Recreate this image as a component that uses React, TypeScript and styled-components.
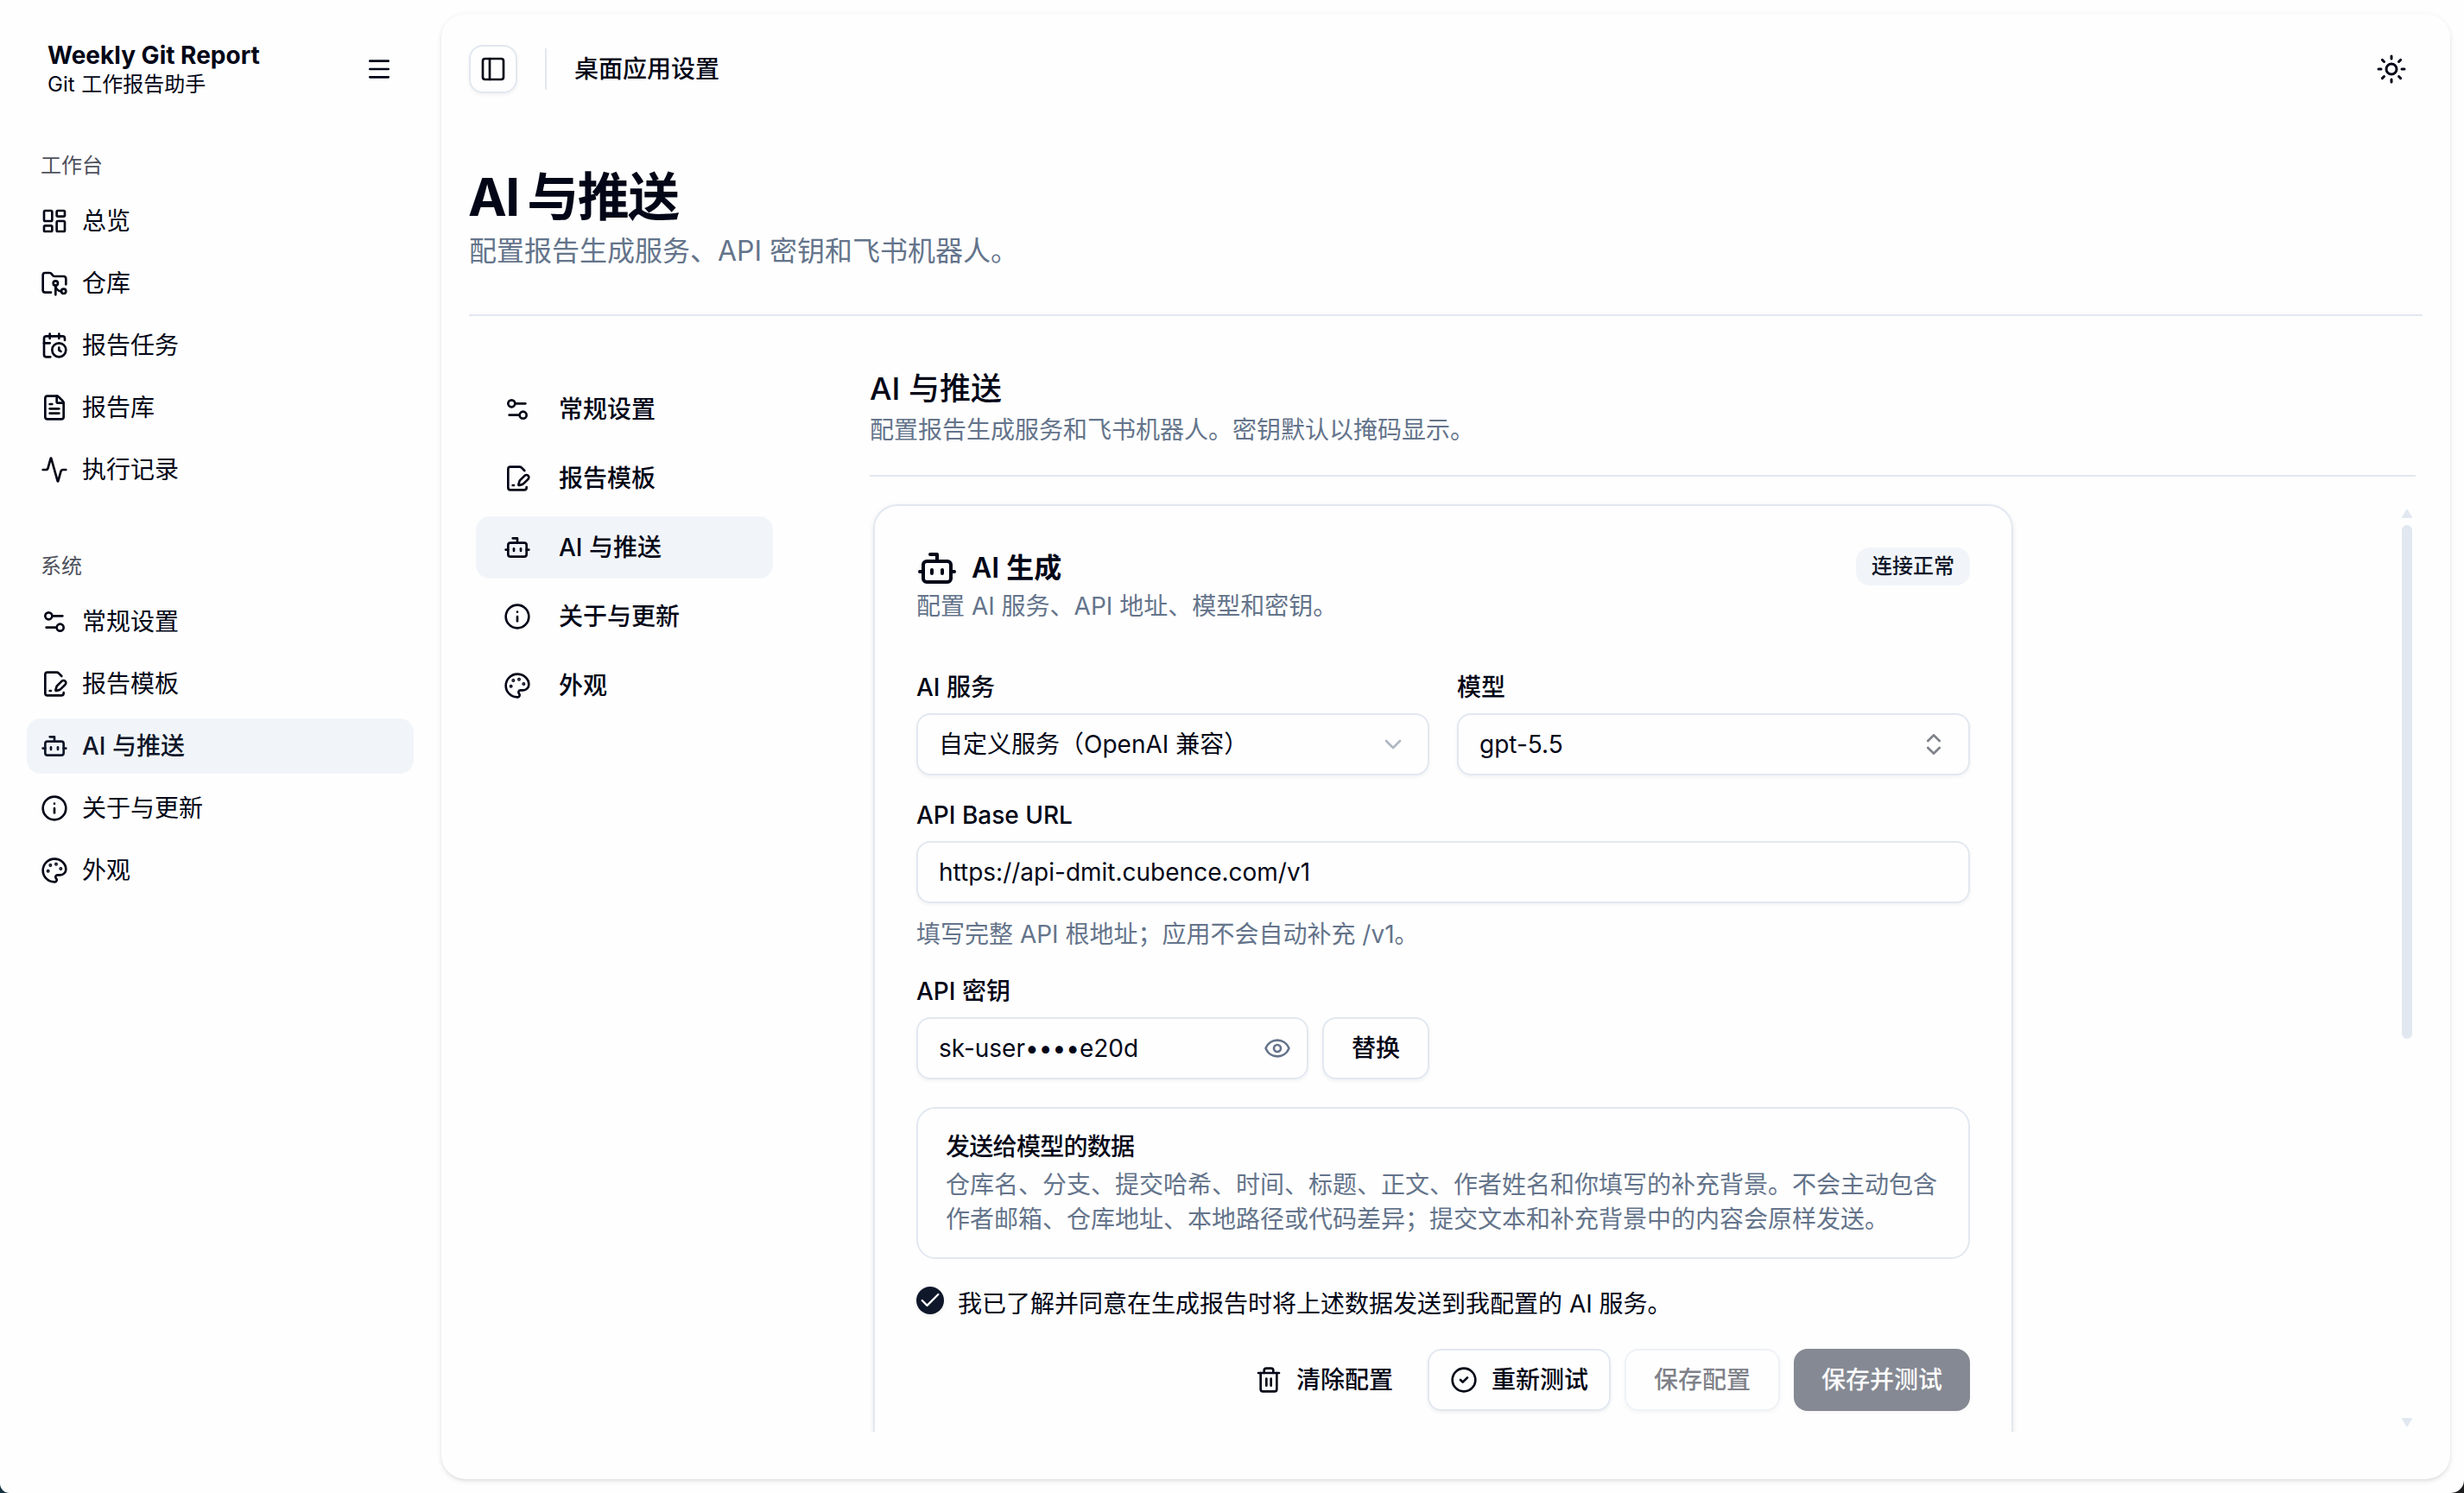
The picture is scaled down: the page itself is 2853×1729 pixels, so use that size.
import React from "react";
import styled, { createGlobalStyle, css } from "styled-components";
import {
  Activity,
  Bot,
  CalendarClock,
  Check,
  ChevronDown,
  ChevronsUpDown,
  CircleCheck,
  Eye,
  FilePenLine,
  FileText,
  FolderGit2,
  Info,
  LayoutDashboard,
  Menu,
  Palette,
  PanelLeft,
  Settings2,
  Sun,
  Trash2,
} from "lucide-react";
import type { LucideIcon } from "lucide-react";

const color = {
  bg: "#fefefe",
  ink: "#020617",
  primary: "#0f172a",
  muted: "#64748b",
  border: "#e2e8f0",
  accent: "#f1f5f9",
};

const GlobalStyle = createGlobalStyle`
  *, *::before, *::after { box-sizing: border-box; }
  body {
    margin: 0;
    background: linear-gradient(90deg, #17333f 0 50%, #1c1c1e 50% 100%);
    color: ${color.ink};
    font-family: Inter, "Noto Sans CJK SC", sans-serif;
    font-size: 28px;
    line-height: 40px;
    -webkit-font-smoothing: antialiased;
  }
  h1, h2, h3, p { margin: 0; }
  button { font: inherit; color: inherit; background: none; border: 0; padding: 0; }
  svg { display: block; flex: none; }
`;

const Window = styled.div`
  width: 2853px;
  height: 1729px;
  display: flex;
  overflow: hidden;
  background: ${color.bg};
  border-radius: 0 0 15px 11px;
`;

/* Sidebar */

const Sidebar = styled.aside`
  width: 511px;
  padding: 32px 32px 0 31px;
  display: flex;
  flex-direction: column;
`;

const Brand = styled.header`
  height: 96px;
  padding: 0 24px;
  display: flex;
  align-items: center;
  justify-content: space-between;
`;

const BrandText = styled.div`
  display: flex;
  flex-direction: column;
`;

const BrandName = styled.strong`
  font-size: 28px;
  font-weight: 700;
  line-height: 35px;
`;

const BrandSub = styled.span`
  font-size: 24px;
  line-height: 31px;
  word-spacing: 1px;
`;

const NavGroup = styled.nav`
  display: flex;
  flex-direction: column;
  gap: 8px;
  & + & {
    margin-top: 48px;
  }
`;

const GroupLabel = styled.div`
  height: 64px;
  padding: 0 16px;
  margin-bottom: -8px;
  display: flex;
  align-items: center;
  font-size: 24px;
  color: #4e515d;
`;

const Groups = styled.div`
  padding-top: 32px;
`;

const NavItem = styled.a<{ $active?: boolean }>`
  height: 64px;
  padding: 0 16px;
  display: flex;
  align-items: center;
  gap: 16px;
  border-radius: 16px;
  ${(p) =>
    p.$active &&
    css`
      background: ${color.accent};
      color: ${color.primary};
      font-weight: 500;
    `}
`;

/* Main panel */

const Panel = styled.main`
  width: 2326px;
  height: 1697px;
  margin-top: 16px;
  padding: 0 32px;
  display: flex;
  flex-direction: column;
  background: ${color.bg};
  border-radius: 28px;
  box-shadow: 0 2px 6px rgba(0, 0, 0, 0.1), 0 2px 4px -2px rgba(0, 0, 0, 0.1);
`;

const TopBar = styled.header`
  height: 128px;
  display: flex;
  align-items: center;
`;

const IconButton = styled.button`
  width: 56px;
  height: 56px;
  display: grid;
  place-items: center;
  border: 2px solid ${color.border};
  border-radius: 16px;
  box-shadow: 0 2px 4px rgba(0, 0, 0, 0.05);
`;

const Divider = styled.span`
  width: 2px;
  height: 48px;
  margin: 0 32px;
  background: ${color.border};
`;

const TopTitle = styled.span`
  font-weight: 500;
`;

const ThemeButton = styled.button`
  width: 72px;
  height: 72px;
  margin-left: auto;
  display: grid;
  place-items: center;
`;

const PageHead = styled.section`
  height: 222px;
  padding-top: 48px;
  border-bottom: 2px solid ${color.border};
`;

const PageTitle = styled.h1`
  margin-left: -1px;
  font-size: 60px;
  line-height: 72px;
  font-weight: 700;
  letter-spacing: -1.5px;
  word-spacing: -3px;
`;

const PageSub = styled.p`
  margin-top: 3px;
  font-size: 32px;
  line-height: 48px;
  color: ${color.muted};
`;

const Columns = styled.div`
  display: flex;
  height: 1292px;
`;

const SettingsNav = styled.nav`
  width: 464px;
  padding: 72px 112px 0 8px;
  display: flex;
  flex-direction: column;
  gap: 8px;
`;

const SettingsLink = styled.a<{ $active?: boolean }>`
  height: 72px;
  padding: 0 32px;
  display: flex;
  align-items: center;
  gap: 32px;
  border-radius: 16px;
  font-weight: 500;
  background: ${(p) => (p.$active ? color.accent : "transparent")};
`;

const Section = styled.section`
  width: 1790px;
  display: flex;
  flex-direction: column;
`;

const SectionHead = styled.header`
  height: 186px;
  padding-top: 56px;
  border-bottom: 2px solid ${color.border};
`;

const SectionTitle = styled.h2`
  font-size: 36px;
  line-height: 56px;
  font-weight: 500;
`;

const SectionDesc = styled.p`
  color: ${color.muted};
`;

const ScrollArea = styled.div`
  height: 1078px;
  margin-top: 28px;
  display: flex;
  justify-content: space-between;
  overflow: hidden;
`;

const ScrollBar = styled.div`
  width: 12px;
  height: 1078px;
  margin-right: 4px;
  padding: 10px 0 6px;
  display: flex;
  flex-direction: column;
  justify-content: space-between;
`;

const ScrollTop = styled.div`
  display: flex;
  flex-direction: column;
  gap: 8px;
`;

const ScrollThumb = styled.span`
  width: 12px;
  height: 595px;
  border-radius: 6px;
  background: ${color.border};
`;

/* Card */

const Card = styled.article`
  width: 1320px;
  height: 1500px;
  margin: 4px 0 0 4px;
  padding: 48px;
  border: 2px solid ${color.border};
  border-radius: 28px;
  box-shadow: 0 2px 6px rgba(0, 0, 0, 0.08), 0 2px 4px -2px rgba(0, 0, 0, 0.08);
`;

const CardHead = styled.header`
  height: 88px;
  display: flex;
  justify-content: space-between;
`;

const CardTitle = styled.h3`
  display: flex;
  align-items: center;
  gap: 16px;
  font-size: 32px;
  line-height: 48px;
  font-weight: 600;
`;

const Muted = styled.p`
  color: ${color.muted};
`;

const Badge = styled.span`
  height: 44px;
  padding: 0 18px;
  border-radius: 16px;
  background: ${color.accent};
  color: ${color.primary};
  font-size: 24px;
  line-height: 43px;
  font-weight: 500;
`;

const Row = styled.div`
  display: flex;
  gap: 32px;
`;

const Field = styled.div`
  flex: 1;
  display: flex;
  flex-direction: column;
`;

const Label = styled.label`
  height: 28px;
  margin-bottom: 16px;
  line-height: 28px;
  font-weight: 500;
`;

const Input = styled.div<{ $width?: number; $padRight?: number }>`
  width: ${(p) => (p.$width ? p.$width + "px" : "100%")};
  height: 72px;
  padding: 0 ${(p) => p.$padRight ?? 24}px 0 24px;
  display: flex;
  align-items: center;
  justify-content: space-between;
  border: 2px solid ${color.border};
  border-radius: 16px;
  box-shadow: 0 2px 4px rgba(0, 0, 0, 0.05);
`;

const Form = styled.div`
  margin-top: 60px;
  display: flex;
  flex-direction: column;
  gap: 32px;
`;

const Hint = styled.p`
  height: 40px;
  margin-top: 16px;
  color: ${color.muted};
`;

const KeyRow = styled.div`
  display: flex;
  gap: 16px;
`;

const Notice = styled.div`
  height: 176px;
  padding: 24px 32px;
  border: 2px solid ${color.border};
  border-radius: 22px;
`;

const NoticeTitle = styled.div`
  margin-bottom: 4px;
  font-weight: 500;
  letter-spacing: -0.7px;
`;

const Consent = styled.label`
  height: 40px;
  display: flex;
  gap: 16px;
`;

const CheckMark = styled.span`
  width: 32px;
  height: 32px;
  display: grid;
  place-items: center;
  border-radius: 50%;
  background: ${color.primary};
  color: #fefefe;
  box-shadow: 0 2px 4px rgba(0, 0, 0, 0.06);
`;

const Actions = styled.div`
  display: flex;
  justify-content: flex-end;
  gap: 16px;
`;

const Button = styled.button<{
  $kind?: "outline" | "ghost" | "primary";
  $icon?: boolean;
  $disabled?: boolean;
}>`
  height: 72px;
  padding: 0 ${(p) => (p.$icon ? 24 : 32)}px;
  display: flex;
  align-items: center;
  gap: 16px;
  border-radius: 16px;
  font-weight: 500;
  opacity: ${(p) => (p.$disabled ? 0.5 : 1)};
  ${(p) =>
    (p.$kind ?? "outline") === "outline" &&
    css`
      border: 2px solid ${color.border};
      box-shadow: 0 2px 4px rgba(0, 0, 0, 0.06);
    `}
  ${(p) =>
    p.$kind === "primary" &&
    css`
      background: ${color.primary};
      color: #f8fafc;
      box-shadow: 0 2px 4px rgba(0, 0, 0, 0.06);
    `}
`;

const workbench: [LucideIcon, string][] = [
  [LayoutDashboard, "总览"],
  [FolderGit2, "仓库"],
  [CalendarClock, "报告任务"],
  [FileText, "报告库"],
  [Activity, "执行记录"],
];

const system: [LucideIcon, string][] = [
  [Settings2, "常规设置"],
  [FilePenLine, "报告模板"],
  [Bot, "AI 与推送"],
  [Info, "关于与更新"],
  [Palette, "外观"],
];

const current = "AI 与推送";

function Group({ label, items }: { label: string; items: [LucideIcon, string][] }) {
  return (
    <NavGroup>
      <GroupLabel>{label}</GroupLabel>
      {items.map(([Icon, text]) => (
        <NavItem key={text} $active={text === current}>
          <Icon size={32} />
          {text}
        </NavItem>
      ))}
    </NavGroup>
  );
}

function Arrow({ down }: { down?: boolean }) {
  return (
    <svg width="12" height="10" viewBox="0 0 12 10" fill={color.border} stroke={color.border} strokeWidth="2" strokeLinejoin="round">
      <path d={down ? "M1 1h10L6 9z" : "M1 9h10L6 1z"} />
    </svg>
  );
}

export default function App() {
  return (
    <>
      <GlobalStyle />
      <Window>
        <Sidebar>
          <Brand>
            <BrandText>
              <BrandName>Weekly Git Report</BrandName>
              <BrandSub>Git 工作报告助手</BrandSub>
            </BrandText>
            <Menu size={32} />
          </Brand>
          <Groups>
            <Group label="工作台" items={workbench} />
            <Group label="系统" items={system} />
          </Groups>
        </Sidebar>

        <Panel>
          <TopBar>
            <IconButton>
              <PanelLeft size={32} />
            </IconButton>
            <Divider />
            <TopTitle>桌面应用设置</TopTitle>
            <ThemeButton>
              <Sun size={36} />
            </ThemeButton>
          </TopBar>

          <PageHead>
            <PageTitle>AI 与推送</PageTitle>
            <PageSub>配置报告生成服务、API 密钥和飞书机器人。</PageSub>
          </PageHead>

          <Columns>
            <SettingsNav>
              {system.map(([Icon, text]) => (
                <SettingsLink key={text} $active={text === current}>
                  <Icon size={32} />
                  {text}
                </SettingsLink>
              ))}
            </SettingsNav>

            <Section>
              <SectionHead>
                <SectionTitle>AI 与推送</SectionTitle>
                <SectionDesc>配置报告生成服务和飞书机器人。密钥默认以掩码显示。</SectionDesc>
              </SectionHead>

              <ScrollArea>
                <Card>
                  <CardHead>
                    <div>
                      <CardTitle>
                        <Bot size={48} />
                        AI 生成
                      </CardTitle>
                      <Muted>配置 AI 服务、API 地址、模型和密钥。</Muted>
                    </div>
                    <Badge>连接正常</Badge>
                  </CardHead>

                  <Form>
                    <Row>
                      <Field>
                        <Label>AI 服务</Label>
                        <Input>
                          自定义服务（OpenAI 兼容）
                          <ChevronDown size={32} color={color.muted} opacity={0.5} />
                        </Input>
                      </Field>
                      <Field>
                        <Label>模型</Label>
                        <Input>
                          gpt-5.5
                          <ChevronsUpDown size={32} opacity={0.5} />
                        </Input>
                      </Field>
                    </Row>

                    <Field>
                      <Label>API Base URL</Label>
                      <Input>https://api-dmit.cubence.com/v1</Input>
                      <Hint>填写完整 API 根地址；应用不会自动补充 /v1。</Hint>
                    </Field>

                    <Field>
                      <Label>API 密钥</Label>
                      <KeyRow>
                        <Input $width={454} $padRight={18}>
                          sk-user••••e20d
                          <Eye size={32} color={color.muted} />
                        </Input>
                        <Button>替换</Button>
                      </KeyRow>
                    </Field>

                    <Notice>
                      <NoticeTitle>发送给模型的数据</NoticeTitle>
                      <Muted>
                        仓库名、分支、提交哈希、时间、标题、正文、作者姓名和你填写的补充背景。不会主动包含作者邮箱、仓库地址、本地路径或代码差异；提交文本和补充背景中的内容会原样发送。
                      </Muted>
                    </Notice>

                    <Consent>
                      <CheckMark>
                        <Check size={28} strokeWidth={2} />
                      </CheckMark>
                      我已了解并同意在生成报告时将上述数据发送到我配置的 AI 服务。
                    </Consent>

                    <Actions>
                      <Button $kind="ghost" $icon>
                        <Trash2 size={32} />
                        清除配置
                      </Button>
                      <Button $icon>
                        <CircleCheck size={32} />
                        重新测试
                      </Button>
                      <Button $disabled>保存配置</Button>
                      <Button $kind="primary" $disabled>
                        保存并测试
                      </Button>
                    </Actions>
                  </Form>
                </Card>

                <ScrollBar>
                  <ScrollTop>
                    <Arrow />
                    <ScrollThumb />
                  </ScrollTop>
                  <Arrow down />
                </ScrollBar>
              </ScrollArea>
            </Section>
          </Columns>
        </Panel>
      </Window>
    </>
  );
}
